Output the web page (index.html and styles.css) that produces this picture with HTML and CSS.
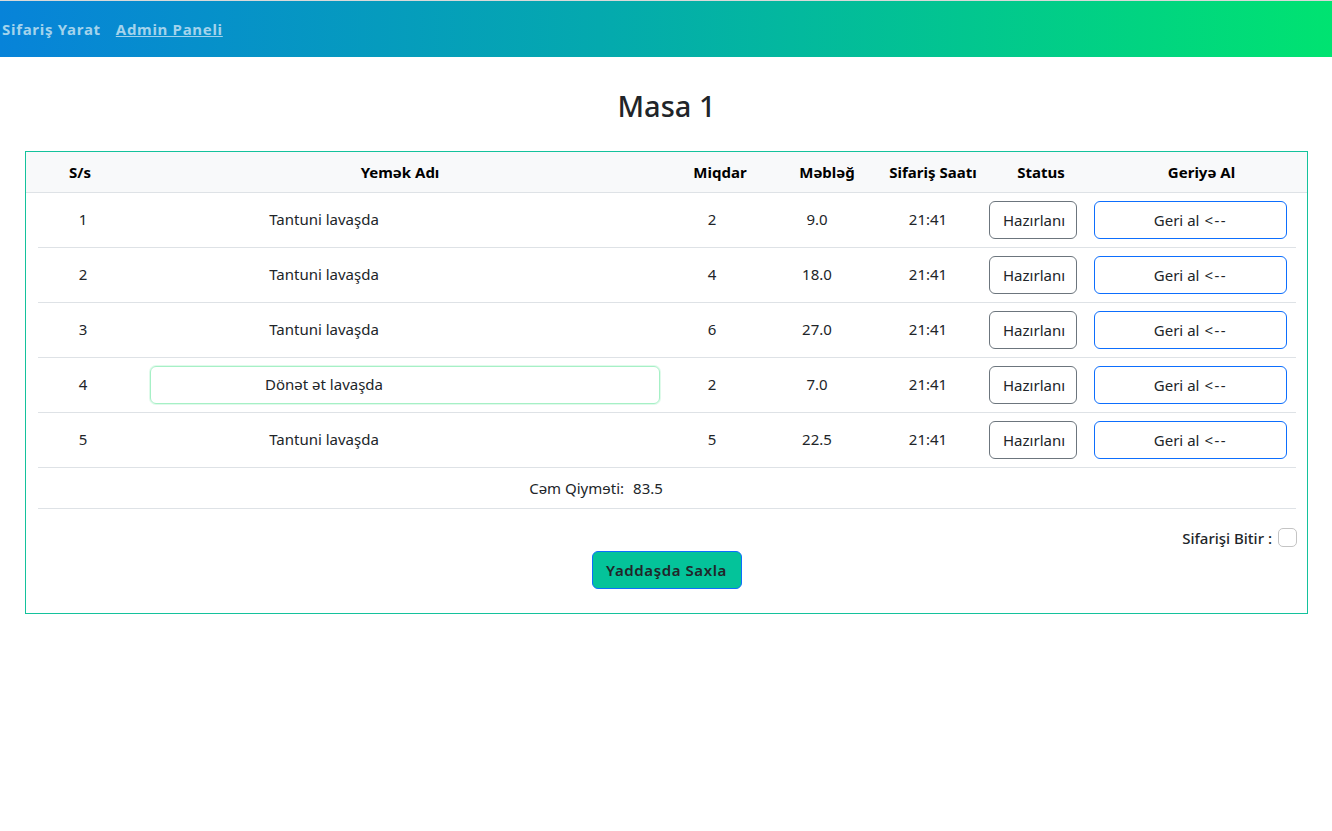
FILE: index.html
```html
<!DOCTYPE html>
<html lang="az">
<head>
<meta charset="utf-8">
<title>Masa 1</title>
<link rel="stylesheet" href="styles.css">
</head>
<body>
<nav class="navbar">
  <a class="nav-link">Sifariş Yarat</a>
  <a class="nav-link underline">Admin Paneli</a>
</nav>
<main class="page">
  <h2 class="title">Masa 1</h2>
  <section class="order-card">
    <div class="thead">
      <div>S/s</div>
      <div>Yemək Adı</div>
      <div>Miqdar</div>
      <div>Məbləğ</div>
      <div>Sifariş Saatı</div>
      <div>Status</div>
      <div>Geriyə Al</div>
    </div>
    <div class="tbody">
      <div class="row">
        <div class="cell txt">1</div>
        <div class="cell name"><div class="name-input">Tantuni lavaşda</div></div>
        <div class="cell txt">2</div>
        <div class="cell txt">9.0</div>
        <div class="cell txt">21:41</div>
        <div class="cell"><div class="status">Hazırlanı</div></div>
        <div class="cell back"><div class="back-btn">Geri al <span class="arrow">&lt;--</span></div></div>
      </div>
      <div class="row">
        <div class="cell txt">2</div>
        <div class="cell name"><div class="name-input">Tantuni lavaşda</div></div>
        <div class="cell txt">4</div>
        <div class="cell txt">18.0</div>
        <div class="cell txt">21:41</div>
        <div class="cell"><div class="status">Hazırlanı</div></div>
        <div class="cell back"><div class="back-btn">Geri al <span class="arrow">&lt;--</span></div></div>
      </div>
      <div class="row">
        <div class="cell txt">3</div>
        <div class="cell name"><div class="name-input">Tantuni lavaşda</div></div>
        <div class="cell txt">6</div>
        <div class="cell txt">27.0</div>
        <div class="cell txt">21:41</div>
        <div class="cell"><div class="status">Hazırlanı</div></div>
        <div class="cell back"><div class="back-btn">Geri al <span class="arrow">&lt;--</span></div></div>
      </div>
      <div class="row">
        <div class="cell txt">4</div>
        <div class="cell name"><div class="name-input focused">Dönət ət lavaşda</div></div>
        <div class="cell txt">2</div>
        <div class="cell txt">7.0</div>
        <div class="cell txt">21:41</div>
        <div class="cell"><div class="status">Hazırlanı</div></div>
        <div class="cell back"><div class="back-btn">Geri al <span class="arrow">&lt;--</span></div></div>
      </div>
      <div class="row">
        <div class="cell txt">5</div>
        <div class="cell name"><div class="name-input">Tantuni lavaşda</div></div>
        <div class="cell txt">5</div>
        <div class="cell txt">22.5</div>
        <div class="cell txt">21:41</div>
        <div class="cell"><div class="status">Hazırlanı</div></div>
        <div class="cell back"><div class="back-btn">Geri al <span class="arrow">&lt;--</span></div></div>
      </div>
      <div class="total-row">
        <span>Cəm Qiymɘti:</span><span class="total-val">83.5</span>
      </div>
    </div>
    <div class="finish">
      <span>Sifarişi Bitir :</span>
      <input type="checkbox" class="check">
    </div>
    <div class="actions">
      <button class="save-btn">Yaddaşda Saxla</button>
    </div>
  </section>
</main>
</body>
</html>
```

FILE: styles.css
```css
* { box-sizing: border-box; }

body {
  margin: 0;
  font-family: "Noto Sans", "Open Sans", sans-serif;
  font-size: 15px;
  color: #212529;
  background: #fff;
}

.navbar {
  height: 57px;
  border-top: 1px solid #d9d9d9;
  background: linear-gradient(90deg, #0783d9 0%, #04a9ae 45%, #00e371 100%);
  display: flex;
  align-items: center;
  gap: 15px;
  padding: 0 0 0 2px;
}

.nav-link {
  color: #a3d3ec;
  font-weight: 700;
  font-size: 15px;
  letter-spacing: 0.7px;
  text-decoration: none;
}

.nav-link.underline { text-decoration: underline; }

.page {
  padding: 0 24px 0 25px;
}

.title {
  margin: 30px 0 26px;
  text-align: center;
  font-size: 29px;
  font-weight: 500;
  line-height: 38px;
  color: #212529;
}

.order-card {
  border: 1px solid #14c29c;
  padding-bottom: 24px;
}

.thead {
  display: grid;
  grid-template-columns: 108px 532px 108px 106px 106px 110px 1fr;
  height: 41px;
  background: #f8f9fa;
  border-bottom: 1px solid #dee2e6;
  align-items: center;
  text-align: center;
  font-weight: 700;
  color: #000;
}

.tbody {
  padding: 0 11px 0 12px;
}

.row {
  display: grid;
  grid-template-columns: 90px 542px 84px 126px 96px 114px 1fr;
  height: 55px;
  border-bottom: 1px solid #dee2e6;
  align-items: center;
}

.cell {
  text-align: center;
  display: flex;
  justify-content: center;
  align-items: center;
}

.cell.txt {
  padding-bottom: 3px;
}

.cell.name {
  justify-content: flex-start;
  padding: 0 10px 0 22px;
}

.name-input {
  width: 510px;
  height: 38px;
  border: 1px solid transparent;
  border-radius: 6px;
  display: flex;
  align-items: center;
  justify-content: center;
  padding: 0 162px 3px 0;
}

.name-input.focused {
  border-color: #a6f0c6;
  box-shadow: 0 0 0 1px rgba(166, 240, 198, 0.35);
}

.status {
  width: 88px;
  height: 38px;
  border: 1px solid #6c757d;
  border-radius: 6px;
  display: flex;
  align-items: center;
  padding: 0 0 1px 13px;
  white-space: nowrap;
}

.cell.back {
  justify-content: flex-start;
  padding: 0 9px 0 4px;
}

.back-btn {
  width: 100%;
  height: 38px;
  border: 1px solid #0d6efd;
  border-radius: 6px;
  display: flex;
  align-items: center;
  justify-content: center;
  gap: 5px;
  padding-bottom: 1px;
}

.arrow {
  letter-spacing: 1.5px;
}

.total-row {
  height: 41px;
  border-bottom: 1px solid #dee2e6;
  display: flex;
  align-items: center;
  justify-content: center;
  gap: 9px;
  padding: 0 142px 1px 0;
}

.finish {
  display: flex;
  justify-content: flex-end;
  align-items: center;
  gap: 6px;
  padding: 19px 10px 0 0;
  font-weight: 500;
  height: 38px;
}

.check {
  appearance: none;
  -webkit-appearance: none;
  width: 19px;
  height: 19px;
  margin: 0;
  border: 1px solid #c4c4c4;
  border-radius: 5px;
  background: #fff;
}

.actions {
  display: flex;
  justify-content: center;
  padding-top: 4px;
}

.save-btn {
  width: 150px;
  height: 38px;
  background: #04c39a;
  border: 1px solid #0d6efd;
  border-radius: 6px;
  font-family: "Noto Sans", "Open Sans", sans-serif;
  font-size: 15px;
  font-weight: 600;
  letter-spacing: 0.6px;
  color: #212529;
  padding: 0;
}
```
